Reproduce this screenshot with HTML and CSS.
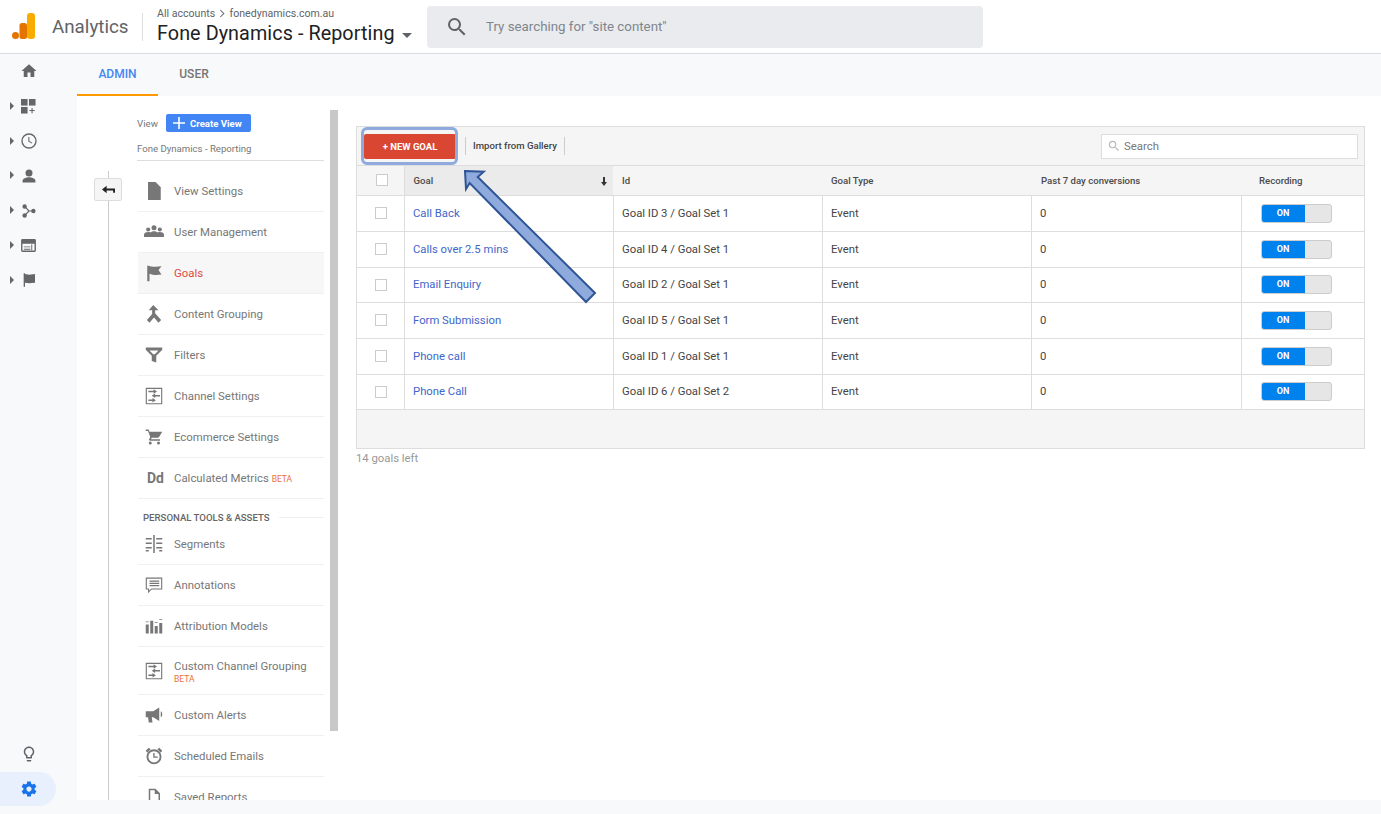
FILE: index.html
```html
<!DOCTYPE html>
<html lang="en">
<head>
<meta charset="utf-8">
<title>Goals - Analytics</title>
<link rel="stylesheet" href="styles.css">
</head>
<body>
<div class="app">
  <header class="topbar">
    <svg class="logo" viewBox="0 0 23 26" width="23" height="26"><rect x="15" y="0" width="8" height="26" rx="3" fill="#f9ab00"/><rect x="7.500" y="10" width="7.500" height="16" rx="2.500" fill="#e37400"/><circle cx="3.500" cy="22.500" r="3.500" fill="#e37400"/></svg>
    <span class="brand">Analytics</span>
    <div class="account">
      <div class="crumbs">All accounts <svg viewBox="0 0 8 10" width="7" height="9"><path d="M1.500 1l4 4-4 4" fill="none" stroke="#5f6368" stroke-width="1.200"/></svg> fonedynamics.com.au</div>
      <div class="property">Fone Dynamics - Reporting <span class="caret"></span></div>
    </div>
    <div class="searchbar">
      <svg viewBox="0 0 24 24" width="24" height="24"><path fill="#5f6368" d="M15.500 14h-.79l-.28-.27A6.470 6.470 0 0 0 16 9.500 6.500 6.500 0 1 0 9.500 16c1.610 0 3.090-.59 4.230-1.570l.27.28v.79l5 4.990L20.490 19l-4.990-5zm-6 0C7.010 14 5 11.990 5 9.500S7.010 5 9.500 5 14 7.010 14 9.500 11.990 14 9.500 14z"/></svg>
      <span>Try searching for "site content"</span>
    </div>
  </header>

  <div class="below">
    <aside class="rail">
      <div class="rail-top">
        <div class="rail-item"><svg viewBox="0 0 24 24" width="18" height="18"><path d="M10 20v-6h4v6h5v-8h3L12 3 2 12h3v8z"/></svg></div>
        <div class="rail-item"><i class="tri"></i><svg viewBox="0 0 16 16" width="15" height="15"><rect x="0" y="0" width="7" height="7"/><rect x="8.500" y="0" width="7" height="7"/><rect x="0" y="8.500" width="7" height="7"/><path d="M11.200 9.500h1.200v2.200h2.200v1.200h-2.200v2.200h-1.200v-2.200H9v-1.200h2.200z"/></svg></div>
        <div class="rail-item"><i class="tri"></i><svg viewBox="0 0 24 24" width="16" height="16"><circle cx="12" cy="12" r="10.500" fill="none" stroke="#666" stroke-width="2"/><path d="M11 6h1.600v6l4.400 2.600-.8 1.300-5.200-3.100z"/></svg></div>
        <div class="rail-item"><i class="tri"></i><svg viewBox="0 0 24 24" width="14" height="14"><circle cx="12" cy="7" r="6"/><path d="M1 23v-3c0-4 7-6 11-6s11 2 11 6v3z"/></svg></div>
        <div class="rail-item"><i class="tri"></i><svg viewBox="0 0 16 16" width="14" height="14"><circle cx="3" cy="2.800" r="2.500"/><circle cx="3" cy="13.200" r="2.500"/><circle cx="13" cy="8" r="2.500"/><path d="M3 2.800L8 8l-5 5.200M8 8h5" fill="none" stroke="#666" stroke-width="1.400"/></svg></div>
        <div class="rail-item"><i class="tri"></i><svg viewBox="0 0 16 14" width="15" height="13"><path fill-rule="evenodd" d="M1.500 0h13A1.500 1.500 0 0 1 16 1.500v11a1.500 1.500 0 0 1-1.500 1.500h-13A1.500 1.500 0 0 1 0 12.500v-11A1.500 1.500 0 0 1 1.500 0zM1.500 5v7.500h13V5z"/><path d="M3 8h7v1H3zM3 10.500h7v1H3zM11 6v6h1V6z"/></svg></div>
        <div class="rail-item"><i class="tri"></i><svg viewBox="0 0 24 24" width="16" height="16"><path d="M4 2h2v20H4zM6 3l6 1 9-1v13l-9 1-6-1z"/></svg></div>
      </div>
      <div class="rail-bottom">
        <div class="bulb"><svg viewBox="0 0 24 24" width="18" height="18"><path fill="#5f6368" d="M9 21c0 .55.45 1 1 1h4c.55 0 1-.45 1-1v-1H9v1zm3-19C8.140 2 5 5.140 5 9c0 2.380 1.190 4.470 3 5.740V17c0 .55.45 1 1 1h6c.55 0 1-.45 1-1v-2.260c1.810-1.270 3-3.360 3-5.740 0-3.860-3.140-7-7-7zm2.850 11.100l-.85.6V16h-4v-2.300l-.85-.6C7.800 12.160 7 10.630 7 9c0-2.760 2.240-5 5-5s5 2.240 5 5c0 1.630-.8 3.160-2.150 4.100z"/></svg></div>
        <div class="gear"><svg viewBox="0 0 24 24" width="18" height="18"><path fill="#1a73e8" d="M19.430 12.980c.04-.32.07-.64.07-.98s-.03-.66-.07-.98l2.110-1.650c.19-.15.24-.42.12-.64l-2-3.460c-.12-.22-.39-.3-.61-.22l-2.490 1c-.52-.4-1.080-.73-1.690-.98l-.38-2.650C14.460 2.180 14.250 2 14 2h-4c-.25 0-.46.18-.49.42l-.38 2.650c-.61.25-1.170.59-1.690.98l-2.490-1c-.23-.09-.49 0-.61.22l-2 3.460c-.13.22-.07.49.12.64l2.110 1.650c-.04.32-.07.65-.07.98s.03.66.07.98l-2.110 1.650c-.19.15-.24.42-.12.64l2 3.460c.12.22.39.3.61.22l2.490-1c.52.4 1.080.73 1.690.98l.38 2.650c.03.24.24.42.49.42h4c.25 0 .46-.18.49-.42l.38-2.650c.61-.25 1.170-.59 1.690-.98l2.490 1c.23.09.49 0 .61-.22l2-3.460c.12-.22.07-.49-.12-.64l-2.110-1.650zM12 15.500c-1.930 0-3.500-1.570-3.500-3.500s1.570-3.500 3.500-3.500 3.500 1.570 3.500 3.500-1.570 3.500-3.500 3.500z"/></svg></div>
      </div>
    </aside>

    <div class="content">
      <nav class="tabs">
        <a class="tab tab-active">ADMIN</a>
        <a class="tab">USER</a>
      </nav>
      <div class="workspace">
        <section class="admin-col">
          <div class="thumb"></div>
          <div class="rail-line"></div>
          <button class="back"><svg viewBox="0 0 14 10" width="13" height="10"><path d="M5 .5v3h9V8h-2V5.500H5v3L0 4.500z" fill="#222"/></svg></button>
          <div class="view-row"><span>View</span><a class="create"><svg viewBox="0 0 12 12" width="12" height="12"><path d="M5.200 0h1.600v5.200H12v1.600H6.800V12H5.200V6.800H0V5.200h5.200z" fill="#fff"/></svg>Create View</a></div>
          <div class="view-name">Fone Dynamics - Reporting</div>
          <ul class="nav-list">
            <li class="nav-item"><svg class="ni" viewBox="0 0 24 24"><path d="M4 0h10l7 7v17H4z"/></svg><span>View Settings</span></li>
            <li class="nav-item"><svg class="ni ni-wide" viewBox="0 0 24 18"><circle cx="12" cy="4" r="3"/><circle cx="5" cy="6" r="2.500"/><circle cx="19" cy="6" r="2.500"/><path d="M0 15v-3c0-2 3-3 5-3 1 0 1.800.2 2.500.6C9 8.400 10.500 8 12 8s3 .4 4.500 1.600C17.200 9.200 18 9 19 9c2 0 5 1 5 3v3z"/></svg><span>User Management</span></li>
            <li class="nav-item nav-current"><svg class="ni" viewBox="0 0 24 24"><path d="M3 2c6 2 12 2 19 1l-4 5 4 6c-6 1-11 1-16-1v10H3z"/></svg><span>Goals</span></li>
            <li class="nav-item"><svg class="ni" viewBox="0 0 24 24"><path d="M11 0l7 7h-4.500v4l8 9-3.500 3.500-6-7-6 7L2.500 20l7-8V7H5z"/></svg><span>Content Grouping</span></li>
            <li class="nav-item"><svg class="ni ni-wide" viewBox="0 0 24 24"><path d="M1 2h22v3l-8 8v9l-6-2v-7L1 5zM6 6l5 5h2l5-5z" fill-rule="evenodd"/></svg><span>Filters</span></li>
            <li class="nav-item"><svg class="ni" viewBox="0 0 24 24"><path fill-rule="evenodd" d="M1 1h22v22H1zm1.500 1.500v19h19v-19z"/><path d="M4.500 5h7V3l4.500 3-4.500 3V7h-7zM20 10.500h-6.500v-2L9 11.500l4.500 3v-2H20zM4.500 16.500H10v-2l4.500 3-4.500 3v-2H4.500z"/></svg><span>Channel Settings</span></li>
            <li class="nav-item"><svg class="ni" viewBox="0 0 24 24"><path d="M7 18a2 2 0 1 0 0 4 2 2 0 0 0 0-4zM1 2v2h3l3 8-1.500 3c-.5 1 .3 2 1.500 2h13v-2H8l1-2h8c.8 0 1.400-.4 1.800-1L23 5H6L5 2zM18 18a2 2 0 1 0 0 4 2 2 0 0 0 0-4z"/></svg><span>Ecommerce Settings</span></li>
            <li class="nav-item"><b class="dd">Dd</b><span>Calculated Metrics <em class="beta">BETA</em></span></li>
          </ul>
          <div class="section-head"><span>PERSONAL TOOLS &amp; ASSETS</span></div>
          <ul class="nav-list">
            <li class="nav-item"><svg class="ni" viewBox="0 0 24 24"><path d="M11 0h2v24h-2zM1 4h8v2H1zM1 10h8v2H1zM1 16h8v2H1zM1 20h4v2H1zM15 4h8v2h-8zM15 10h8v2h-8zM15 16h8v2h-8zM19 20h4v2h-4z"/></svg><span>Segments</span></li>
            <li class="nav-item"><svg class="ni" viewBox="0 0 24 24"><path fill-rule="evenodd" d="M1 2h22v16H9l-5 5v-5H1zm1.500 1.500v13h3v3l3-3h13v-13z"/><path d="M6 6h13v1.500H6zM6 9h13v1.500H6zM6 12h13v1.500H6z"/></svg><span>Annotations</span></li>
            <li class="nav-item"><svg class="ni" viewBox="0 0 24 24"><path d="M1 10h4v12H1zM7 5h4v17H7zM13 12h4v10h-4zM19 8h4v14h-4z"/><path d="M1 6h4v1H1zM13 7h4v1h-4zM19 3h4v1h-4z"/></svg><span>Attribution Models</span></li>
            <li class="nav-item nav-tall"><svg class="ni" viewBox="0 0 24 24"><path fill-rule="evenodd" d="M1 1h22v22H1zm1.500 1.500v19h19v-19z"/><path d="M4.500 5h7V3l4.500 3-4.500 3V7h-7zM20 10.500h-6.500v-2L9 11.500l4.500 3v-2H20zM4.500 16.500H10v-2l4.500 3-4.500 3v-2H4.500z"/></svg><span class="two-line">Custom Channel Grouping<em class="beta">BETA</em></span></li>
            <li class="nav-item"><svg class="ni" viewBox="0 0 24 24"><path d="M1 7h10l8-5v18l-8-5H9l1 7H5l-1-7H1zM21 7c1.500.8 2 2.500 2 4s-.5 3.200-2 4z"/></svg><span>Custom Alerts</span></li>
            <li class="nav-item"><svg class="ni" viewBox="0 0 24 24"><path fill-rule="evenodd" d="M12 3a10 10 0 1 1 0 20 10 10 0 0 1 0-20zm0 2.500a7.500 7.500 0 1 0 0 15 7.500 7.500 0 0 0 0-15z"/><path d="M11 8h1.800v4.500H17v1.700h-6zM1 5l4-4 2.500 2-4.500 4.500zM23 5l-4-4-2.500 2 4.500 4.500z"/></svg><span>Scheduled Emails</span></li>
            <li class="nav-item"><svg class="ni" viewBox="0 0 24 24"><path fill-rule="evenodd" d="M5 1h9l6 6v16H5zm2 2v18h11V8h-5V3z"/></svg><span>Saved Reports</span></li>
          </ul>
        </section>

        <main class="main">
          <div class="panel">
            <div class="toolbar">
              <button class="new-goal">+ NEW GOAL</button>
              <span class="import">Import from Gallery</span>
              <label class="table-search"><svg viewBox="0 0 24 24" width="14" height="14"><path fill="#bbb" d="M15.500 14h-.79l-.28-.27A6.470 6.470 0 0 0 16 9.500 6.500 6.500 0 1 0 9.500 16c1.610 0 3.090-.59 4.230-1.570l.27.28v.79l5 4.990L20.490 19l-4.990-5zm-6 0C7.010 14 5 11.990 5 9.500S7.010 5 9.500 5 14 7.010 14 9.500 11.990 14 9.500 14z"/></svg>Search</label>
            </div>
            <table class="goals">
              <colgroup><col class="c1"><col class="c2"><col class="c3"><col class="c4"><col class="c5"><col class="c6"></colgroup>
              <thead>
                <tr><th class="cb"><i class="box box-head"></i></th><th class="sorted">Goal<svg class="sort" viewBox="0 0 6 9" width="6" height="9"><path d="M2 0h2v5h2L3 9 0 5h2z" fill="#333"/></svg></th><th>Id</th><th>Goal Type</th><th class="past">Past 7 day conversions</th><th class="rec">Recording</th></tr>
              </thead>
              <tbody>
                <tr><td class="cb"><i class="box"></i></td><td><a>Call Back</a></td><td>Goal ID 3 / Goal Set 1</td><td>Event</td><td>0</td><td><span class="toggle"><b>ON</b><i></i></span></td></tr>
                <tr><td class="cb"><i class="box"></i></td><td><a>Calls over 2.5 mins</a></td><td>Goal ID 4 / Goal Set 1</td><td>Event</td><td>0</td><td><span class="toggle"><b>ON</b><i></i></span></td></tr>
                <tr><td class="cb"><i class="box"></i></td><td><a>Email Enquiry</a></td><td>Goal ID 2 / Goal Set 1</td><td>Event</td><td>0</td><td><span class="toggle"><b>ON</b><i></i></span></td></tr>
                <tr><td class="cb"><i class="box"></i></td><td><a>Form Submission</a></td><td>Goal ID 5 / Goal Set 1</td><td>Event</td><td>0</td><td><span class="toggle"><b>ON</b><i></i></span></td></tr>
                <tr><td class="cb"><i class="box"></i></td><td><a>Phone call</a></td><td>Goal ID 1 / Goal Set 1</td><td>Event</td><td>0</td><td><span class="toggle"><b>ON</b><i></i></span></td></tr>
                <tr><td class="cb"><i class="box"></i></td><td><a>Phone Call</a></td><td>Goal ID 6 / Goal Set 2</td><td>Event</td><td>0</td><td><span class="toggle"><b>ON</b><i></i></span></td></tr>
              </tbody>
            </table>
            <div class="panel-foot"></div>
          </div>
          <p class="left">14 goals left</p>
        </main>
      </div>
    </div>
  </div>
  <div class="focus-ring"></div>
  <svg class="arrow" viewBox="0 0 140 140" width="140" height="140"><path d="M4 1 L22.700 1.700 L16.700 7 L134 123 L125 132 L8.700 13 L5 19 Z" fill="#8faadc" stroke="#2f5597" stroke-width="2"/></svg>
</div>
</body>
</html>
```
FILE: styles.css
```css
* { box-sizing: border-box; }
html, body { margin: 0; padding: 0; }
body { width: 1381px; height: 814px; overflow: hidden; font-family: Roboto, "Liberation Sans", sans-serif; font-size: 11.4px; color: #666; background: #f8f9fa; }
.app { position: relative; width: 1381px; height: 814px; overflow: hidden; }

.topbar { display: flex; align-items: center; height: 54px; padding-left: 12px; background: #fff; border-bottom: 1px solid #dadce0; }
.logo { flex: none; margin-top: -1px; }
.brand { margin-left: 17px; font-size: 18.800px; color: #5f6368; width: 76px; white-space: nowrap; }
.account { flex: none; margin-left: 14px; padding-left: 14px; border-left: 1px solid #dadce0; height: 28px; display: flex; flex-direction: column; justify-content: center; width: 285px; white-space: nowrap; }
.crumbs { font-size: 10.600px; color: #5f6368; margin-top: -1px; line-height: 14px; }
.crumbs svg { margin: 0 1px; vertical-align: -1px; }
.property { font-size: 19.750px; line-height: 25px; letter-spacing: .08px; color: #202124; }
.caret { display: inline-block; margin-left: 2px; border-left: 5px solid transparent; border-right: 5px solid transparent; border-top: 5px solid #5f6368; vertical-align: 2px; }
.searchbar { flex: none; display: flex; align-items: center; gap: 17px; width: 556px; height: 42px; padding-left: 18px; background: #e9ebee; border-radius: 4px; font-size: 13.300px; color: #80868b; }

.below { display: flex; height: 760px; }
.rail { flex: none; width: 77px; height: 760px; display: flex; flex-direction: column; justify-content: space-between; padding-bottom: 8px; }
.rail-top { width: 57px; }
.rail-item { position: relative; height: 34.800px; display: flex; align-items: center; justify-content: center; }
.rail svg { fill: #666; display: block; }
.tri { position: absolute; left: 10px; top: 13px; border-top: 4px solid transparent; border-bottom: 4px solid transparent; border-left: 4px solid #666; }
.bulb { width: 57px; height: 34px; display: flex; align-items: center; justify-content: center; margin-bottom: 1px; }
.gear { width: 56px; height: 34px; display: flex; align-items: center; padding-left: 19.500px; background: #e8f0fe; border-radius: 0 17px 17px 0; }

.content { flex: 1; display: flex; flex-direction: column; height: 746px; }
.tabs { display: flex; height: 42px; flex: none; }
.tab { width: 81px; line-height: 40px; text-align: center; font-size: 12px; font-weight: 500; color: #757575; border-bottom: 2px solid transparent; }
.tab + .tab { width: 72px; }
.tab-active { color: #4285f4; border-bottom-color: #f90; }

.workspace { flex: 1; min-height: 0; display: flex; background: #fff; overflow: hidden; }
.admin-col { position: relative; flex: none; width: 279px; padding: 18px 0 0 60px; }
.thumb { position: absolute; left: 253px; top: 14px; width: 8px; height: 621px; background: #c8c8c8; }
.rail-line { position: absolute; left: 31px; top: 75px; bottom: 0; width: 1px; background: #ccc; }
.back { position: absolute; left: 17px; top: 82px; width: 28px; height: 23px; padding: 0; display: flex; align-items: center; justify-content: center; background: #f5f5f5; border: 1px solid #ddd; border-radius: 2px; }
.view-row { display: flex; align-items: center; height: 18px; gap: 8px; font-size: 9.700px; color: #777; }
.create { display: flex; align-items: center; gap: 5px; width: 85px; height: 18px; padding-left: 7px; background: #4285f4; border-radius: 2px; color: #fff; font-size: 9.600px; font-weight: 700; white-space: nowrap; }
.view-name { margin-top: 10px; width: 187px; height: 19px; border-bottom: 1px solid #ddd; font-size: 9.600px; line-height: 13px; color: #777; }
.nav-list { list-style: none; margin: 10px 0 0 1px; padding: 0; width: 186px; }
.nav-item { display: flex; align-items: center; height: 41px; border-bottom: 1px solid #f0f0f0; color: #777; font-size: 11.400px; white-space: nowrap; }
.nav-current { background: #f7f7f7; color: #e04a3f; }
.nav-tall { height: 48px; }
.ni { flex: none; width: 18px; height: 18px; margin: 0 11px 0 7px; fill: #777; }
.ni-wide { width: 20px; height: 18px; margin: 0 10px 0 6px; }
.dd { width: 36px; padding-left: 9px; font-size: 14px; font-weight: 700; color: #777; }
.beta { font-style: normal; font-size: 8.500px; color: #e8703a; }
.two-line { display: flex; flex-direction: column; line-height: 14px; padding-top: 2px; }
.two-line .beta { line-height: 11px; margin-top: 1px; }
.section-head { display: flex; align-items: center; gap: 9px; width: 187px; height: 14px; margin-top: 11px; padding-left: 6px; font-size: 9.600px; font-weight: 500; color: #666; white-space: nowrap; }
.section-head::after { content: ""; flex: 1; height: 1px; background: #eee; }
.section-head + .nav-list { margin-top: 0; }

.main { flex: none; width: 1009px; padding-top: 30px; }
.panel { border: 1px solid #ddd; background: #f5f5f5; }
.toolbar { display: flex; align-items: center; height: 39px; padding-left: 7px; border-bottom: 1px solid #ddd; }
.new-goal { width: 92px; height: 25px; padding: 0; border: 0; border-radius: 2px; background: #d94732; color: #fff; font: 700 9.500px Roboto, sans-serif; }
.import { margin-left: 9px; padding: 0 7px; height: 18px; line-height: 17px; border-left: 1px solid #ccc; border-right: 1px solid #ccc; font-size: 9.600px; font-weight: 500; color: #444; white-space: nowrap; }
.table-search { display: flex; align-items: center; gap: 3px; width: 257px; height: 25px; margin-left: auto; margin-right: 6px; padding-left: 5px; background: #fff; border: 1px solid #ddd; font-size: 11.400px; color: #777; }

.goals { width: 1007px; table-layout: fixed; border-collapse: collapse; background: #fff; }
.c1 { width: 47px; } .c2 { width: 209px; } .c3 { width: 209px; } .c4 { width: 209px; } .c5 { width: 210px; } .c6 { width: 123px; }
.goals th { height: 29px; padding: 0 9px; background: #f5f5f5; border-bottom: 1px solid #ddd; text-align: left; font-size: 9.600px; font-weight: 500; color: #4a4a4a; }
.goals th.sorted { position: relative; background: #ebebeb; border-left: 1px solid #ddd; }
.goals th.past { padding-left: 10px; }
.goals th.rec { padding-left: 18px; }
.sort { position: absolute; right: 6px; top: 11px; }
.goals td { height: 36px; padding: 0 9px 0 8.500px; border-bottom: 1px solid #ddd; border-left: 1px solid #ddd; color: #444; font-size: 11.300px; }
.goals td.cb { border-left: 0; }
.goals tbody tr:nth-child(3n) td { height: 35px; }
.goals a { color: #3f66c8; }
.cb { padding-left: 18px !important; }
.box { display: block; width: 12px; height: 12px; background: #fff; border: 1px solid #ccc; }
.box-head { margin-left: 1px; }
.toggle { display: flex; width: 71px; height: 19px; margin-left: 10.500px; border: 1px solid #ccc; border-radius: 3px; overflow: hidden; background: #e6e6e6; }
.toggle b { width: 43px; background: #0082ee; color: #fff; font-size: 9px; font-weight: 700; text-align: center; line-height: 17px; }
.toggle i { flex: 1; }
.panel-foot { height: 38px; }
.left { margin: 3px 0 0; font-size: 11.300px; color: #999; line-height: 14px; }

.focus-ring { position: absolute; left: 361px; top: 127px; width: 97px; height: 38px; border: 3px solid #8faadc; border-radius: 6px; pointer-events: none; }
.arrow { position: absolute; left: 461px; top: 170px; }
```
